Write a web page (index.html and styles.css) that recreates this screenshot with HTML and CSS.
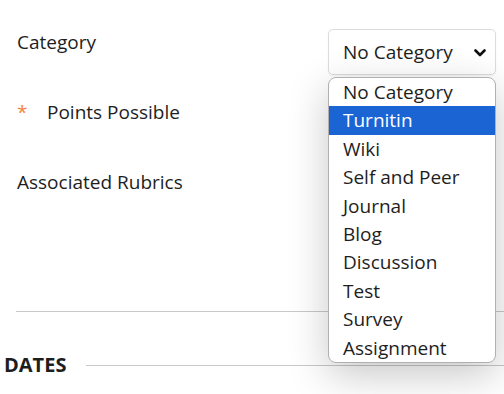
FILE: index.html
```html
<!DOCTYPE html>
<html>
<head>
  <title>Assignment Settings</title>
  <link rel="stylesheet" href="styles.css">
</head>
<body>

  <div class="settings">
    <div class="field">
      <span class="field-label">Category</span>
      <div class="select-wrap">
        <div class="select-box">
          <span>No Category</span>
          <svg class="chevron" width="12" height="8" viewBox="0 0 12 8">
            <path d="M1.5 1.5 L6 6 L10.5 1.5" fill="none" stroke="#111" stroke-width="2.6" stroke-linecap="round" stroke-linejoin="round"/>
          </svg>
        </div>
        <ul class="options">
          <li>No Category</li>
          <li class="selected">Turnitin</li>
          <li>Wiki</li>
          <li>Self and Peer</li>
          <li>Journal</li>
          <li>Blog</li>
          <li>Discussion</li>
          <li>Test</li>
          <li>Survey</li>
          <li>Assignment</li>
        </ul>
      </div>
    </div>

    <div class="field">
      <span class="field-label"><span class="required">*</span>Points Possible</span>
    </div>

    <div class="field">
      <span class="field-label">Associated Rubrics</span>
    </div>

    <div class="rubric-line"></div>
    <hr class="divider">
  </div>

  <div class="section-head">
    <h3>DATES</h3>
    <span class="section-rule"></span>
  </div>

</body>
</html>
```

FILE: styles.css
```css
html {
  height: 100%;
  overflow: hidden;
}

body {
  font-family: 'Open Sans', sans-serif;
  font-size: 19px;
  color: #1e1e1e;
  background: #fff;
  margin: 0;
  padding: 0;
  min-height: 100%;
}

.settings {
  padding: 29px 8px 0 17px;
}

.field {
  display: flex;
  justify-content: space-between;
  align-items: flex-start;
  height: 70px;
  line-height: 26px;
}

.required {
  color: #f5843c;
  display: inline-block;
  width: 30px;
}

.select-wrap {
  position: relative;
  width: 168px;
}

.select-box {
  display: flex;
  align-items: center;
  justify-content: space-between;
  height: 44px;
  padding: 0 9px 0 14px;
  border: 1px solid #dcdcdc;
  border-radius: 5px;
  box-shadow: 0 1px 2px rgba(0, 0, 0, 0.06);
}

.chevron {
  margin-top: 1px;
}

.options {
  position: absolute;
  top: 48px;
  left: 0;
  right: 0;
  margin: 0;
  padding: 0;
  list-style: none;
  background: white;
  border: 1px solid #b0b0b0;
  border-radius: 8px;
  box-shadow: 0 12px 40px rgba(0, 0, 0, 0.22);
  z-index: 2;
}

.options li {
  height: 28.4px;
  line-height: 28.4px;
  padding-left: 14px;
}

.options li.selected {
  background: #1a64d4;
  color: white;
}

.rubric-line {
  margin: 17px 0 0 auto;
  width: 120px;
  border-top: 1px solid #c8c8c8;
}

.divider {
  border: none;
  border-top: 1px solid #c8c8c8;
  margin: 54px -8px 0 -1px;
}

.section-head {
  display: flex;
  align-items: center;
  padding-left: 4px;
  margin-top: 40px;
}

.section-head h3 {
  margin: 0;
  font-size: 20px;
  line-height: 26px;
  font-weight: bold;
  color: #1e1e1e;
}

.section-rule {
  flex: 1;
  border-top: 1px solid #c8c8c8;
  margin-left: 20px;
}
```
